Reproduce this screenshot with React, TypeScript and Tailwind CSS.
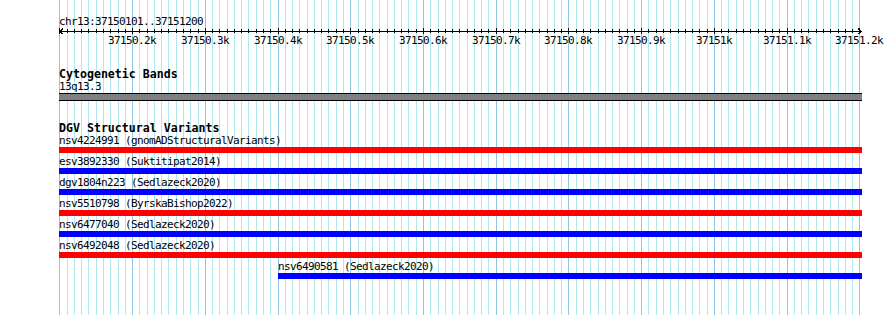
import React from "react";

const N = 110;
const gx = (i: number) => Math.round(59.4 + (i * 800) / N);

const labels = [
  "37150.2k",
  "37150.3k",
  "37150.4k",
  "37150.5k",
  "37150.6k",
  "37150.7k",
  "37150.8k",
  "37150.9k",
  "37151k",
  "37151.1k",
  "37151.2k",
];

type Feat = { label: string; color: "red" | "blue"; start: number };
const feats: Feat[] = [
  { label: "nsv4224991 (gnomADStructuralVariants)", color: "red", start: 59 },
  { label: "esv3892330 (Suktitipat2014)", color: "blue", start: 59 },
  { label: "dgv1804n223 (Sedlazeck2020)", color: "blue", start: 59 },
  { label: "nsv5510798 (ByrskaBishop2022)", color: "red", start: 59 },
  { label: "nsv6477040 (Sedlazeck2020)", color: "blue", start: 59 },
  { label: "nsv6492048 (Sedlazeck2020)", color: "red", start: 59 },
  { label: "nsv6490581 (Sedlazeck2020)", color: "blue", start: 278 },
];

const small =
  "font-['DejaVu_Sans_Mono',monospace] text-[11px] tracking-[-0.62px] leading-[13px] h-[13px] text-black whitespace-nowrap";
const bold =
  "font-['DejaVu_Sans_Mono',monospace] font-bold text-[11.6px] leading-[12px] h-[12px] text-black whitespace-nowrap";

function Grid() {
  const lines = [];
  for (let i = 0; i <= N; i++) {
    const major = i % 10 === 0;
    lines.push(
      <line
        key={i}
        x1={gx(i) + 0.5}
        x2={gx(i) + 0.5}
        y1={0}
        y2={315}
        stroke={major ? "#8cc6e6" : "#aee8ef"}
        strokeWidth={1}
      />
    );
  }
  return (
    <svg
      className="absolute inset-0"
      width={890}
      height={315}
      shapeRendering="crispEdges"
    >
      {lines}
    </svg>
  );
}

function Ruler() {
  const ticks = [];
  for (let i = 0; i <= N; i++) {
    const x = gx(i) - 59 + 0.5;
    const major = i % 10 === 0;
    ticks.push(
      <line
        key={i}
        x1={x}
        x2={x}
        y1={major ? 0 : 1}
        y2={major ? 6 : 5}
        stroke="#000"
      />
    );
  }
  return (
    <svg width={803} height={6} className="block" shapeRendering="crispEdges">
      <line x1={1} x2={802} y1={3.5} y2={3.5} stroke="#000" />
      {ticks}
      <path d="M4 0.5 L1 3.5 L4 6.5" fill="none" stroke="#000" />
      <path d="M799 0.5 L802 3.5 L799 6.5" fill="none" stroke="#000" />
    </svg>
  );
}

export default function App() {
  return (
    <div className="relative w-[890px] h-[315px] bg-white overflow-hidden">
      <Grid />
      <div className="relative pl-[59px] pt-[15px] flex flex-col">
        <div className={small}>chr13:37150101..37151200</div>
        <Ruler />
        <div className="relative h-[13px]">
          {labels.map((l, k) => (
            <span
              key={l}
              className={`${small} absolute top-0 -translate-x-1/2`}
              style={{ left: gx((k + 1) * 10) - 59 }}
            >
              {l}
            </span>
          ))}
        </div>

        <div className={`${bold} mt-[21px]`}>Cytogenetic Bands</div>
        <div className={small}>13q13.3</div>
        <div className="w-[803px] h-[8px] bg-[#808080] border-y border-black" />

        <div className={`${bold} mt-[21px]`}>DGV Structural Variants</div>
        <div className="flex flex-col">
          {feats.map((f) => (
            <div
              key={f.label}
              className="flex flex-col mb-[2px]"
              style={{ marginLeft: f.start - 59 }}
            >
              <div className={small}>{f.label}</div>
              <div
                className={`h-[6px] ${
                  f.color === "red" ? "bg-[#ff0000]" : "bg-[#0000ff]"
                }`}
                style={{ width: 862 - f.start }}
              />
            </div>
          ))}
        </div>
      </div>
    </div>
  );
}
